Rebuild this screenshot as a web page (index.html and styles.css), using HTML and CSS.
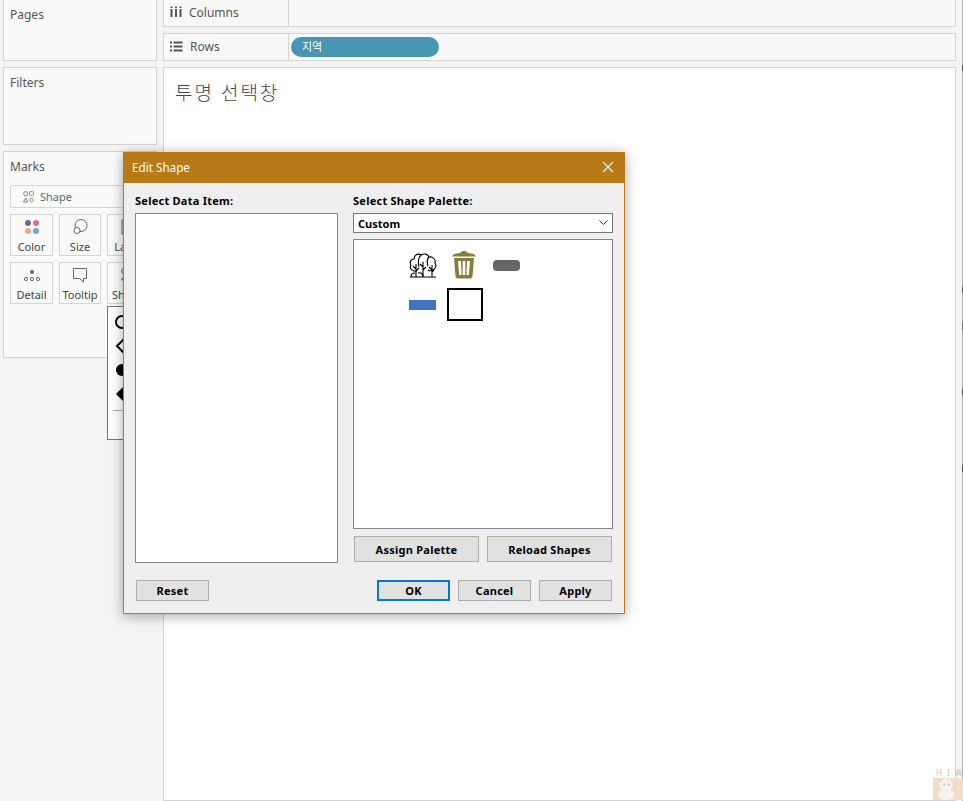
FILE: index.html
```html
<!DOCTYPE html>
<html lang="ko">
<head>
    <meta charset="UTF-8">
    <title>Edit Shape</title>
    <link rel="stylesheet" href="styles.css">
</head>
<body>
    <div class="workspace">
        <aside class="side">
            <section class="card pages"><span class="card-title">Pages</span></section>
            <section class="card filters"><span class="card-title">Filters</span></section>
            <section class="card marks">
                <span class="card-title">Marks</span>
                <div class="mark-type">
                    <svg width="11" height="12" viewBox="0 0 11 12" fill="none" stroke="#8a8a8a">
                        <circle cx="2.7" cy="2.7" r="2.1"/><rect x="6.5" y="0.6" width="4" height="4" rx="1"/>
                        <path d="M2.700 7l2.200 4H.5zM8.500 6.800l2 2.200-2 2.200-2-2.200z"/>
                    </svg>
                    Shape
                </div>
                <div class="mark-grid">
                    <div class="mark-btn">
                        <svg width="20" height="18" viewBox="0 0 20 18">
                            <circle cx="6" cy="5" r="3" fill="#7b5d90"/><circle cx="14" cy="5" r="3" fill="#ee6a7c"/>
                            <circle cx="6" cy="13" r="3" fill="#f0a67e"/><circle cx="14" cy="13" r="3" fill="#7ba3cc"/>
                        </svg>
                        Color
                    </div>
                    <div class="mark-btn">
                        <svg width="20" height="18" viewBox="0 0 20 18" fill="none" stroke="#666">
                            <circle cx="11" cy="7.5" r="6" /><circle cx="7" cy="12.500" r="3" fill="#fafafa"/>
                        </svg>
                        Size
                    </div>
                    <div class="mark-btn">
                        <svg width="20" height="18" viewBox="0 0 20 18" fill="none" stroke="#666">
                            <rect x="4" y="2" width="12" height="14"/>
                        </svg>
                        Label
                    </div>
                    <div class="mark-btn">
                        <svg width="20" height="18" viewBox="0 0 20 18" fill="none" stroke="#666">
                            <circle cx="10" cy="6" r="2" fill="#666" stroke="none"/>
                            <circle cx="4" cy="13" r="1.6"/><circle cx="10" cy="13" r="1.6"/><circle cx="16" cy="13" r="1.6"/>
                        </svg>
                        Detail
                    </div>
                    <div class="mark-btn">
                        <svg width="20" height="18" viewBox="0 0 20 18" fill="none" stroke="#666">
                            <path d="M3.500 2.500h13v10h-3v3.500l-4-3.500h-6z"/>
                        </svg>
                        Tooltip
                    </div>
                    <div class="mark-btn">
                        <svg width="20" height="18" viewBox="0 0 20 18" fill="none" stroke="#666">
                            <circle cx="6" cy="5" r="2.4"/><path d="M6 10l2.400 4H3.600z"/>
                        </svg>
                        Shape
                    </div>
                </div>
                <div class="shape-popup">
                    <svg class="popup-shapes" width="22" height="100" viewBox="0 0 22 100">
                        <circle cx="14" cy="14" r="6" fill="none" stroke="#000" stroke-width="2"/>
                        <path d="M16 31l-7 7 7 7" fill="none" stroke="#000" stroke-width="2"/>
                        <circle cx="14" cy="62" r="6"/>
                        <path d="M15 79l-7 7 7 7z"/>
                    </svg>
                    <div class="popup-line"></div>
                </div>
            </section>
        </aside>

        <main class="main">
            <div class="shelf shelf-columns">
                <div class="shelf-label">
                    <svg width="12" height="12" viewBox="0 0 12 12" fill="#555">
                        <rect x="0.5" y="3" width="2" height="8"/><rect x="5" y="3" width="2" height="8"/><rect x="9.5" y="3" width="2" height="8"/>
                        <rect x="0.5" y="0.5" width="2" height="1.5"/><rect x="5" y="0.5" width="2" height="1.5"/><rect x="9.5" y="0.5" width="2" height="1.5"/>
                    </svg>
                    Columns
                </div>
            </div>
            <div class="shelf">
                <div class="shelf-label">
                    <svg width="13" height="11" viewBox="0 0 13 11" fill="#555">
                        <rect y="0.5" width="2" height="2"/><rect x="3.500" y="0.5" width="9" height="2"/>
                        <rect y="4.500" width="2" height="2"/><rect x="3.500" y="4.500" width="9" height="2"/>
                        <rect y="8.500" width="2" height="2"/><rect x="3.500" y="8.500" width="9" height="2"/>
                    </svg>
                    Rows
                </div>
                <div class="pill">지역</div>
            </div>
            <div class="canvas">
                <h1 class="view-title">투명 선택창</h1>
            </div>
        </main>
    </div>

    <div class="window-edge"></div>

    <div class="dialog">
        <div class="dialog-head">
            Edit Shape
            <svg class="dialog-close" width="12" height="12" viewBox="0 0 12 12" stroke="#fff" stroke-width="1.1">
                <path d="M1 1l10 10M11 1L1 11"/>
            </svg>
        </div>
        <div class="dialog-body">
            <div class="col-items">
                <div class="field-label">Select Data Item:</div>
                <div class="list-box items-box"></div>
            </div>
            <div class="col-palette">
                <div class="field-label">Select Shape Palette:</div>
                <div class="select-box">
                    Custom
                    <svg width="9" height="6" viewBox="0 0 9 6" fill="none" stroke="#333"><path d="M0.5 0.5l4 4 4-4"/></svg>
                </div>
                <div class="list-box palette-box">
                    <div class="palette-grid">
                        <div class="shape-cell">
                            <svg class="shape-raised" width="30" height="28" viewBox="0 0 30 28" fill="none" stroke="#000" stroke-width="1.1">
                                <path d="M9 20c-5 1-8-3-6-6-2-3 0-6 3-6 0-4 4-6 7-4 3-2 7-1 8 2 4-1 7 3 6 6 2 3 0 7-3 7-1 1-3 1-4 0"/>
                                <path d="M13 4c-3 3-3 8-2 12M21 6c-2 2-2 6-1 9"/>
                                <path d="M8 26V13M8 18l-3-3M8 20l3-3M15 26V11M15 16l-3-3M15 19l3-3M24 26V14M24 19l-3-3M24 21l2-2"/>
                                <path d="M2 26h26M3 26c0-3 2-4 4-4M10 22c3-1 5 1 5 4"/>
                            </svg>
                        </div>
                        <div class="shape-cell">
                            <svg class="shape-raised shape-left" width="24" height="29" viewBox="0 0 24 29" fill="#8a7b3a">
                                <path d="M9 2.500c0-1 1-1.500 3-1.500s3 .5 3 1.500l6.500 1.500c1 .3 2 1 2 2.500H.5C.5 5 1.500 4.300 2.500 4z"/>
                                <path fill-rule="evenodd" d="M2 8h20l-1.500 18c-.1 1.500-1 2.500-2 2.500H5.500c-1 0-1.900-1-2-2.500zM6 11l1.200 14h2.300L9 11zM10.700 11v14h2.600V11zM15 11l-.5 14h2.300L18 11z"/>
                            </svg>
                        </div>
                        <div class="shape-cell">
                            <div class="shape-gray shape-left"></div>
                        </div>
                        <div class="shape-cell">
                            <div class="shape-blue shape-left"></div>
                        </div>
                        <div class="shape-cell">
                            <div class="shape-frame"></div>
                        </div>
                    </div>
                </div>
                <div class="palette-actions">
                    <button class="btn btn-wide">Assign Palette</button>
                    <button class="btn btn-wide">Reload Shapes</button>
                </div>
            </div>
        </div>
        <div class="dialog-foot">
            <button class="btn">Reset</button>
            <div class="foot-right">
                <button class="btn btn-ok">OK</button>
                <button class="btn">Cancel</button>
                <button class="btn">Apply</button>
            </div>
        </div>
    </div>

    <div class="watermark">
        <div class="watermark-text">H I W</div>
        <div class="watermark-box">
            <svg width="24" height="22" viewBox="0 0 24 24" fill="#f6f2ee">
                <circle cx="13" cy="8" r="7"/><ellipse cx="13" cy="18" rx="9" ry="6"/>
                <circle cx="11" cy="7" r="1" fill="#c9b9ad"/><circle cx="16" cy="7" r="1" fill="#c9b9ad"/>
            </svg>
        </div>
    </div>
</body>
</html>
```

FILE: styles.css
```css
html, body {
    margin: 0;
    height: 801px;
    overflow: hidden;
}
body {
    position: relative;
    background-color: #f4f4f4;
    font-family: "Noto Sans", "Noto Sans CJK KR", sans-serif;
    font-size: 11px;
    color: #444;
}
svg {
    display: block;
    flex: none;
}

.workspace {
    display: flex;
    gap: 6px;
    height: 801px;
    padding: 0 7px 0 3px;
    box-sizing: border-box;
}
.window-edge {
    position: absolute;
    top: 0;
    right: 0;
    width: 1px;
    height: 801px;
    background: linear-gradient(to bottom,
        #b0b0b0 65px, #555 65px, #555 71px,
        #b0b0b0 71px, #b0b0b0 287px, #555 287px, #555 293px,
        #b0b0b0 293px, #b0b0b0 322px, #777 322px, #777 330px,
        #b0b0b0 330px, #b0b0b0 389px, #555 389px, #555 395px,
        #b0b0b0 395px, #b0b0b0 465px, #555 465px, #555 472px,
        #b0b0b0 472px);
}
.side {
    width: 154px;
    display: flex;
    flex-direction: column;
    gap: 6px;
    flex: none;
}
.card {
    background: #fafafa;
    border: 1px solid #d4d4d4;
    box-sizing: border-box;
    padding: 6px;
}
.card-title {
    font-size: 12px;
    color: #555;
}
.pages {
    height: 61px;
    margin-top: 0;
    border-top: none;
}
.filters { height: 78px; }
.marks {
    height: 207px;
    position: relative;
}

.mark-type {
    display: flex;
    align-items: center;
    gap: 6px;
    height: 21px;
    margin-top: 10px;
    padding-left: 12px;
    background: #fafafa;
    border: 1px solid #d4d4d4;
    border-radius: 2px;
    color: #666;
}
.mark-grid {
    display: grid;
    grid-template-columns: 43px 42px 42px;
    grid-auto-rows: 42px;
    gap: 6px 6px;
    margin-top: 6px;
}
.mark-btn {
    display: flex;
    flex-direction: column;
    align-items: center;
    justify-content: center;
    gap: 4px;
    border: 1px solid #d4d4d4;
    line-height: 13px;
    color: #444;
    background: #fafafa;
}
.shape-popup {
    position: absolute;
    left: 103px;
    top: 154px;
    width: 60px;
    height: 134px;
    box-sizing: border-box;
    background: #fff;
    border: 1px solid #777;
}
.popup-shapes { margin-top: 1px; }
.popup-line {
    height: 1px;
    width: 20px;
    margin: 2px 0 0 5px;
    background: #aaa;
}

.main {
    flex: 1;
    display: flex;
    flex-direction: column;
    gap: 6px;
    min-width: 0;
}
.shelf {
    display: flex;
    align-items: center;
    height: 28px;
    flex: none;
    background: #f8f8f8;
    border: 1px solid #d4d4d4;
    box-sizing: border-box;
}
.shelf-columns {
    height: 27px;
    border-top: none;
}
.shelf-label {
    display: flex;
    align-items: center;
    gap: 7px;
    width: 125px;
    height: 100%;
    flex: none;
    padding: 0 0 2px 6px;
    box-sizing: border-box;
    border-right: 1px solid #d4d4d4;
    font-size: 12px;
    color: #555;
}
.pill {
    width: 148px;
    height: 20px;
    margin-left: 2px;
    padding-left: 11px;
    box-sizing: border-box;
    border-radius: 10px;
    background: #4996b2;
    color: #fff;
    line-height: 19px;
}
.canvas {
    flex: 1;
    background: #fff;
    border: 1px solid #d4d4d4;
    box-sizing: border-box;
}
.view-title {
    margin: 12px 0 0 11px;
    font-size: 19px;
    font-weight: 300;
    line-height: 26px;
    color: #444;
    letter-spacing: 2px;
}

.dialog {
    position: absolute;
    left: 123px;
    top: 152px;
    width: 502px;
    height: 462px;
    box-sizing: border-box;
    display: flex;
    flex-direction: column;
    background: #efefef;
    border: 1px solid #b87918;
    box-shadow: 0 2px 12px rgba(0,0,0,0.35);
    color: #000;
}
.dialog-head {
    display: flex;
    align-items: center;
    justify-content: space-between;
    height: 30px;
    flex: none;
    padding: 0 10px 2px 8px;
    box-sizing: border-box;
    background: #b87918;
    color: #fff;
    font-size: 11.7px;
}
.dialog-body {
    display: flex;
    gap: 15px;
    padding: 10px 11px 0 11px;
    flex: 1;
}
.field-label {
    font-weight: 700;
    line-height: 15px;
    height: 20px;
    color: #000;
    letter-spacing: 0.25px;
}
.col-items { width: 203px; }
.col-palette { width: 260px; }
.list-box {
    background: #fff;
    border: 1px solid #85858f;
    box-sizing: border-box;
}
.items-box { height: 350px; }
.select-box {
    display: flex;
    align-items: center;
    justify-content: space-between;
    height: 20px;
    padding: 0 4px;
    box-sizing: border-box;
    background: #fff;
    border: 1px solid #777;
    font-weight: 700;
}
.palette-box {
    height: 290px;
    margin-top: 6px;
}
.palette-grid {
    display: grid;
    grid-template-columns: repeat(3, 42px);
    grid-auto-rows: 39px;
    padding: 6px 0 0 48px;
}
.shape-cell {
    display: flex;
    align-items: center;
    justify-content: center;
}
.shape-raised { margin-bottom: 2px; }
.shape-left { margin-right: 2px; }
.shape-gray {
    width: 27px;
    height: 11px;
    border-radius: 4px;
    background: #666;
}
.shape-blue {
    width: 27px;
    height: 10px;
    background: #4472c4;
}
.shape-frame {
    width: 36px;
    height: 33px;
    box-sizing: border-box;
    border: 2px solid #000;
}
.palette-actions {
    display: flex;
    gap: 8px;
    justify-content: space-between;
    padding: 0 1px;
    margin-top: 7px;
}
.btn {
    width: 73px;
    height: 21px;
    padding: 0;
    box-sizing: border-box;
    background: #e1e1e1;
    border: 1px solid #adadad;
    font-family: inherit;
    font-size: 11px;
    font-weight: 700;
    letter-spacing: 0.25px;
    color: #000;
}
.btn-wide {
    width: 125px;
    height: 26px;
}
.btn-ok { border: 2px solid #0078d7; }
.dialog-foot {
    display: flex;
    justify-content: space-between;
    padding: 0 12px 12px;
}
.foot-right {
    display: flex;
    gap: 8px;
}

.watermark {
    position: absolute;
    right: 0;
    bottom: 1px;
    width: 30px;
}
.watermark-text {
    font-size: 8px;
    color: #c4c4c4;
    line-height: 10px;
    white-space: nowrap;
    padding-left: 3px;
    letter-spacing: 1.5px;
}
.watermark-box {
    height: 22px;
    background: #f3dcc8;
}
```
